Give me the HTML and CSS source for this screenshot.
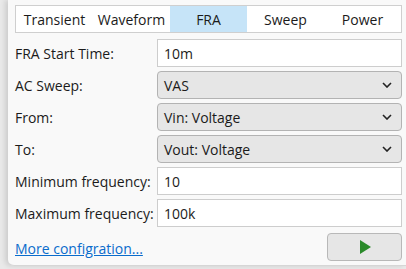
FILE: index.html
```html
<!DOCTYPE html>
<html>
<head>
<meta charset="utf-8">
<link rel="stylesheet" href="styles.css">
</head>
<body>
<div class="panel">
  <div class="tabs">
    <div class="tab">Transient</div>
    <div class="tab">Waveform</div>
    <div class="tab active">FRA</div>
    <div class="tab">Sweep</div>
    <div class="tab">Power</div>
  </div>
  <div class="form">
    <div class="label">FRA Start Time:</div>
    <div class="input">10m</div>
    <div class="label">AC Sweep:</div>
    <div class="select"><span>VAS</span><svg class="chev" width="10" height="6" viewBox="0 0 10 6"><path d="M1 1 L5 5 L9 1" fill="none" stroke="#222" stroke-width="1.6"/></svg></div>
    <div class="label">From:</div>
    <div class="select"><span>Vin: Voltage</span><svg class="chev" width="10" height="6" viewBox="0 0 10 6"><path d="M1 1 L5 5 L9 1" fill="none" stroke="#222" stroke-width="1.6"/></svg></div>
    <div class="label">To:</div>
    <div class="select"><span>Vout: Voltage</span><svg class="chev" width="10" height="6" viewBox="0 0 10 6"><path d="M1 1 L5 5 L9 1" fill="none" stroke="#222" stroke-width="1.6"/></svg></div>
    <div class="label">Minimum frequency:</div>
    <div class="input">10</div>
    <div class="label">Maximum frequency:</div>
    <div class="input">100k</div>
  </div>
  <div class="footer">
    <a class="link" href="#">More configration...</a>
    <div class="run"><svg width="12" height="14" viewBox="0 0 12 14"><path d="M1 0 L12 7 L1 14 Z" fill="#2a8a2a"/></svg></div>
  </div>
</div>
</body>
</html>
```
FILE: styles.css
```css
html, body {
  margin: 0;
  padding: 0;
  background: #e9e9e9;
  width: 406px;
  height: 269px;
  overflow: hidden;
}
body {
  font-family: "Open Sans", "Noto Sans", sans-serif;
  font-size: 14px;
  color: #1b1b1b;
}
.panel {
  margin-left: 8px;
  height: 266px;
  box-sizing: border-box;
  background: #f9f9f9;
  border-bottom: 1px solid #d6d6d6;
  border-bottom-left-radius: 6px;
  box-shadow: -3px 0 5px rgba(0,0,0,0.12);
  padding: 5px 4px 0 7px;
  display: flex;
  flex-direction: column;
}
.tabs {
  display: grid;
  grid-template-columns: repeat(5, 1fr);
  height: 28px;
  box-sizing: border-box;
  border: 1px solid #cfcfcf;
  background: #fff;
}
.tab {
  display: flex;
  align-items: center;
  justify-content: center;
}
.tab.active {
  background: #c6e4f8;
}
.form {
  margin-top: 6px;
  display: grid;
  grid-template-columns: 142px 1fr;
  grid-auto-rows: 28px;
  row-gap: 4px;
}
.label {
  display: flex;
  align-items: center;
}
.input {
  display: flex;
  align-items: center;
  box-sizing: border-box;
  background: #fff;
  border: 1px solid #cdcdcd;
  padding-left: 6px;
}
.select {
  display: flex;
  align-items: center;
  justify-content: space-between;
  box-sizing: border-box;
  background: #e6e6e6;
  border: 1px solid #b3b3b3;
  border-radius: 4px;
  padding: 0 9px 0 6px;
}
.chev {
  display: block;
}
.footer {
  margin-top: 6px;
  display: flex;
  justify-content: space-between;
  align-items: center;
}
.link {
  color: #0a6ccc;
  text-decoration: underline;
  padding-top: 2px;
}
.run {
  width: 75px;
  height: 28px;
  box-sizing: border-box;
  background: #e6e6e6;
  border: 1px solid #b8b8b8;
  border-radius: 4px;
  display: flex;
  align-items: center;
  justify-content: center;
}
```
